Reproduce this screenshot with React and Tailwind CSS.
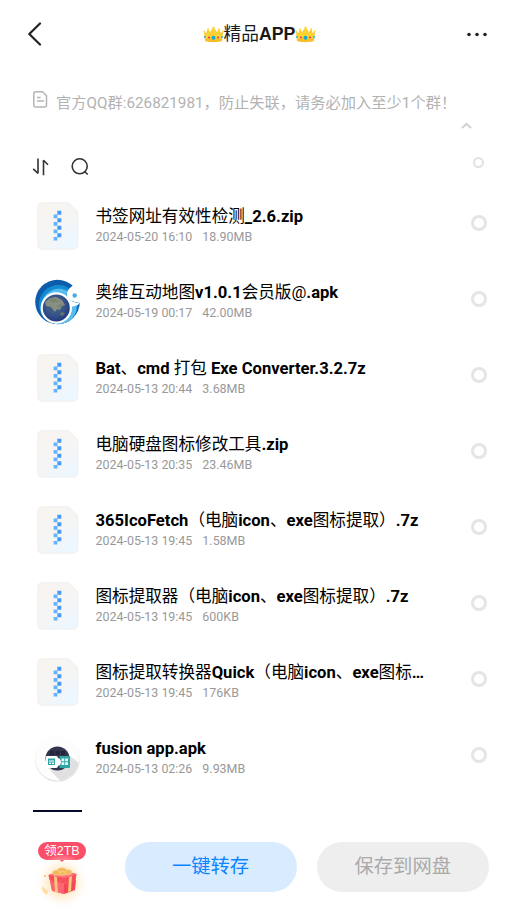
import React from "react";

const files = [
  { name: "书签网址有效性检测_2.6.zip", date: "2024-05-20 16:10", size: "18.90MB", icon: "zip" },
  { name: "奥维互动地图v1.0.1会员版@.apk", date: "2024-05-19 00:17", size: "42.00MB", icon: "globe" },
  { name: "Bat、cmd 打包 Exe Converter.3.2.7z", date: "2024-05-13 20:44", size: "3.68MB", icon: "zip" },
  { name: "电脑硬盘图标修改工具.zip", date: "2024-05-13 20:35", size: "23.46MB", icon: "zip" },
  { name: "365IcoFetch（电脑icon、exe图标提取）.7z", date: "2024-05-13 19:45", size: "1.58MB", icon: "zip" },
  { name: "图标提取器（电脑icon、exe图标提取）.7z", date: "2024-05-13 19:45", size: "600KB", icon: "zip" },
  { name: "图标提取转换器Quick（电脑icon、exe图标…", date: "2024-05-13 19:45", size: "176KB", icon: "zip" },
  { name: "fusion app.apk", date: "2024-05-13 02:26", size: "9.93MB", icon: "fusion" },
];

/* Latin runs are bold, Chinese runs and "@" stay regular */
function MixedText({ text }) {
  return text.split(/([\u3000-\u9fff\uff00-\uffef@]+)/).map((part, i) => (
    <span key={i} className={i % 2 ? "font-normal" : "font-bold"}>
      {part}
    </span>
  ));
}

function Crown() {
  return (
    <svg className="h-[17px] w-[21px]" viewBox="0 0 21 17">
      <path
        d="M2.4 14.5 1.3 5.8l2.2 2L5 3.5l2 3.3L10.5 1.5 14 6.8l2-3.3 1.5 4.3 2.2-2-1.1 8.7q-8.1 2.6-16.2 0Z"
        fill="#fdd32f"
        stroke="#f4b921"
        strokeWidth=".6"
      />
      <path d="M2 12.500q8.500 1.500 17 0l-.5 2.800q-8 1.600-16 0Z" fill="#fbbd25" />
      <g fill="#ffdc3d">
        <circle cx="1.3" cy="5.5" r="1" />
        <circle cx="5" cy="3.2" r="1" />
        <circle cx="10.5" cy="1.7" r="1.2" />
        <circle cx="16" cy="3.2" r="1" />
        <circle cx="19.7" cy="5.5" r="1" />
      </g>
      <circle cx="10.5" cy="11.7" r="2" fill="#15a6d6" />
      <circle cx="6" cy="11.5" r="1.1" fill="#e8396b" />
      <circle cx="15" cy="11.5" r="1.1" fill="#e8396b" />
      <circle cx="1.9" cy="11" r="1.1" fill="#39b5d5" />
      <circle cx="19.1" cy="11" r="1.1" fill="#39b5d5" />
    </svg>
  );
}

function ZipIcon() {
  return (
    <svg className="h-[48px] w-[42px]" viewBox="0 0 42 48">
      <defs>
        <linearGradient id="zipPaper" x1="0" y1="0" x2=".7" y2="1">
          <stop offset="0" stopColor="#f8f4f0" />
          <stop offset=".55" stopColor="#f6f5f4" />
          <stop offset="1" stopColor="#ecf7ff" />
        </linearGradient>
      </defs>
      <path
        d="M5.500.8H30q2 0 3.500 1.500l5.700 5.700q1.500 1.500 1.500 3.500v31q0 4.700-4.700 4.700H5.500Q.8 47.200.8 42.500v-37Q.8.8 5.500.8Z"
        fill="url(#zipPaper)"
        stroke="#f1efed"
        strokeWidth="1"
      />
      <g fill="#4499fa">
        <path d="M20.300 8.700h4v4h-4zM20.300 16.200h4v4h-4zM20.300 23.700h4v4h-4zM20.300 31.200h4v4h-4z" />
        <path d="M16.600 12.500h3.800v3.800h-3.800zM16.600 20h3.800v3.800h-3.800zM16.600 27.500h3.800v3.800h-3.800zM16.600 35h3.800v3.500h-3.800z" fill="#66b2fd" />
      </g>
    </svg>
  );
}

function GlobeIcon() {
  return (
    <svg className="mt-px h-[46px] w-[46px]" viewBox="0 0 46 46">
      <defs>
        <radialGradient id="earth" cx=".45" cy=".4" r=".6">
          <stop offset="0" stopColor="#526d7c" />
          <stop offset=".65" stopColor="#34528a" />
          <stop offset="1" stopColor="#22397c" />
        </radialGradient>
        <clipPath id="globeDisc">
          <path d="M0 0h32l3.500 2-.5 2 3 2.500q-6 3.500-6.500 9Q32 23 46 24v22H0Z" />
        </clipPath>
      </defs>
      <g clipPath="url(#globeDisc)">
        <circle cx="22.500" cy="23" r="22.300" fill="#0e5dab" />
        <circle cx="23.500" cy="25.500" r="19.500" fill="#148ad2" />
        <circle cx="24" cy="27.500" r="17.700" fill="#56bdec" />
      </g>
      <circle cx="21.300" cy="29" r="15.700" fill="#fff" />
      <path d="M32 18q5 6 12.500 6L43 26l-7 2Z" fill="#fff" />
      <circle cx="39.700" cy="16.500" r="2.200" fill="#43aee2" />
      <circle cx="21.300" cy="29" r="13.500" fill="url(#earth)" />
      <path d="m10 23 5-4 6-1 6 3 3 5-3 1-2 4-3-1-2 3-4-5-5-1Z" fill="#a09e86" opacity=".75" />
      <path d="m26 33 4 1-2 3-3-1ZM14 19l7 1 3 3-7 1ZM21 27l6-2-1 4Z" fill="#6c8564" opacity=".7" />
    </svg>
  );
}

function FusionIcon() {
  return (
    <svg className="mt-[2px] h-[46px] w-[46px]" viewBox="0 0 46 46">
      <circle cx="22.500" cy="23.300" r="22.300" fill="#d8d8d8" />
      <circle cx="22.500" cy="22.500" r="22.200" fill="#fdfdfd" />
      <path d="m13 32 22-12 9 7Q41 41 25 44.500Z" fill="#e0e0e0" />
      <circle cx="22.500" cy="22.500" r="12" fill="#31344b" />
      <path d="M15 15h4v4h-4zM20.500 15h4v4h-4zM26 15h4v4h-4z" fill="#222539" />
      <path d="M12 20h9q2 0 2 2 3.500.5 3.500 4t-3.500 4q0 2-2 2h-9q-1 0-1-1V21q0-1 1-1Z" fill="#fff" />
      <path d="M13 22.500h7v6.500h-7Z" fill="#32a6a6" />
      <path d="M14 24.500h5v1h-5zM14 26.500h2v1.500h-2zM17 26.500h2v1.500h-2z" fill="#fff" />
      <path d="M24.500 20H34q1 0 1 1v10q0 1-1 1h-9.500v-2.500q3-3.500 0-7Z" fill="#2fa4a5" />
      <path d="M26.500 22.500h2.800v2.800h-2.800zM30.200 22.500h2.800v2.800h-2.800zM26.500 26.200h2.800V29h-2.800zM30.200 26.200h2.800V29h-2.800z" fill="#e8ffff" />
    </svg>
  );
}

function Gift() {
  return (
    <svg className="h-[56px] w-[60px]" viewBox="0 0 60 56">
      <defs>
        <radialGradient id="giftGlow">
          <stop offset="0" stopColor="#ffd591" />
          <stop offset=".5" stopColor="#ffe8c3" stopOpacity=".75" />
          <stop offset="1" stopColor="#fff" stopOpacity="0" />
        </radialGradient>
      </defs>
      <circle cx="30" cy="27" r="28" fill="url(#giftGlow)" />
      <path d="M28 5h4l-2 2Z" fill="#fb4e69" />
      <path d="m10 31 6 5-1 4q-6-3-5-9Z" fill="#ffdda2" />
      <circle cx="13" cy="21" r="1" fill="#f7b477" />
      <path d="m18 25 14 4 12-4-1 10-11 4-12-4Z" fill="#f24659" />
      <path d="m18 26 14 3v10l-12-3Z" fill="#fb6672" />
      <path d="m16.500 20 14-5 14 4-1 7-11 3-15-4Z" fill="#f6505f" />
      <path d="m16.500 20 14-4 14 3-12 4Z" fill="#ff7779" />
      <path d="m22 21 3 1 1 16-3-1ZM37 22l3-1-1 15-3 1Z" fill="#f7c778" />
      <g fill="#f0b85f" stroke="#ffdc95" strokeWidth=".6">
        <ellipse cx="25.500" cy="17.500" rx="5" ry="2.600" />
        <ellipse cx="35" cy="17" rx="5" ry="2.600" />
        <ellipse cx="30" cy="15" rx="4.500" ry="2.300" />
        <ellipse cx="30.500" cy="18.500" rx="3" ry="1.800" />
      </g>
    </svg>
  );
}

const icons = { zip: ZipIcon, globe: GlobeIcon, fusion: FusionIcon };

function FileRow({ file }) {
  const Icon = icons[file.icon];
  return (
    <li className="flex h-[76px] items-start pl-[35px] pr-[32px] pt-[14px]">
      <div className="flex w-[46px] shrink-0 justify-center">
        <Icon />
      </div>
      <div className="ml-[14.500px] min-w-0 flex-1 pt-[3px]">
        <p className="h-6 whitespace-nowrap text-[16.600px] leading-6 text-black">
          <MixedText text={file.name} />
        </p>
        <p className="-mt-px flex h-[18px] gap-[10px] text-[12.450px] leading-[18px] text-[#999]">
          <span>{file.date}</span>
          <span>{file.size}</span>
        </p>
      </div>
      <span className="mt-[13px] size-4 shrink-0 rounded-full border-[3px] border-[#e5e5e5]" />
    </li>
  );
}

export default function App() {
  return (
    <div className="flex h-[922px] w-[519px] flex-col overflow-hidden bg-white font-['Roboto','Noto_Sans_CJK_SC',sans-serif]">
      {/* HEADER */}
      <header className="flex h-[68px] shrink-0 items-center justify-between pl-[27px] pr-[31px]">
        <svg className="h-6 w-[22px]" viewBox="0 0 22 24" fill="none">
          <path d="M13 1.500 2.300 12 13 22.500" stroke="#222" strokeWidth="2.200" strokeLinecap="round" strokeLinejoin="round" />
        </svg>
        <h1 className="ml-[4px] flex items-center text-[17.700px] leading-6 text-[#1a1a1a]">
          <Crown />
          <span className="font-['Liberation_Sans','Noto_Sans_CJK_SC',sans-serif]">
            <MixedText text="精品APP" />
          </span>
          <Crown />
        </h1>
        <svg className="h-[5px] w-[22px]" viewBox="0 0 22 5" fill="#222">
          <circle cx="3" cy="2.500" r="1.800" />
          <circle cx="11" cy="2.500" r="1.800" />
          <circle cx="19" cy="2.500" r="1.800" />
        </svg>
      </header>

      {/* NOTICE */}
      <div className="flex h-[76px] shrink-0 items-start pl-[32px] pr-[47px] pt-[22px]">
        <svg className="h-[19px] w-[17px] shrink-0" viewBox="0 0 17 19" fill="none" stroke="#b5b5b5" strokeWidth="1.500">
          <path d="M4 1.700h6.500l4 4V15q0 2-2 2H4q-2.200 0-2.200-2V3.700q0-2 2.200-2ZM5 7.500h3.500M5 11h7" />
        </svg>
        <p className="ml-[7px] mt-px whitespace-nowrap text-[15.250px] leading-6 text-[#b2b2b2]">
          官方QQ群:626821981，防止失联，请务必加入至少1个群！
        </p>
        <svg className="ml-auto mt-[32px] h-[7px] w-[11px] shrink-0" viewBox="0 0 11 7" fill="none">
          <path d="M1 6l4.500-4L10 6" stroke="#d2d2d2" strokeWidth="2.200" />
        </svg>
      </div>

      {/* TOOLBAR */}
      <div className="flex h-[44px] shrink-0 items-center pl-[32px] pr-[35px]">
        <svg className="mt-px h-[18px] w-[18px]" viewBox="0 0 18 18" fill="none" stroke="#333" strokeWidth="1.600">
          <path d="M6 .5v14.800L1.200 10.800M11.500 17.200V2.300l4.500 4.500" strokeLinejoin="bevel" />
        </svg>
        <svg className="ml-[21px] mt-px h-[18px] w-[18px]" viewBox="0 0 18 18" fill="none" stroke="#333" strokeWidth="1.600">
          <circle cx="8.700" cy="8.300" r="7.500" />
          <path d="m13.500 13.500 3.300 3" />
        </svg>
        <span className="mb-[7px] ml-auto size-[11px] rounded-full border-2 border-[#e2e2e2]" />
      </div>

      {/* FILES */}
      <ul className="shrink-0">
        {files.map((f) => (
          <FileRow key={f.name} file={f} />
        ))}
      </ul>
      <div className="ml-[33px] mt-[14px] h-[2px] w-[49px] shrink-0 bg-[#050a2c]" />

      {/* ACTIONS */}
      <footer className="flex flex-1 items-start pl-[32px] pr-[30px] pt-[30px]">
        <div className="flex w-[60px] flex-col items-center">
          <div className="flex h-[18px] w-[48px] items-center justify-center rounded-full bg-[#fb4e69] pt-px font-['Liberation_Sans','Noto_Sans_CJK_SC',sans-serif] text-[12.500px] leading-none text-white">
            领2TB
          </div>
          <div className="-mt-[5px]">
            <Gift />
          </div>
        </div>
        <button className="ml-[32.500px] h-[50px] w-[172px] rounded-full bg-[#d9ebff] text-[19.300px] text-[#0a84ff]">
          一键转存
        </button>
        <button className="ml-[20.500px] h-[50px] w-[171.500px] rounded-full bg-[#eee] text-[19.300px] text-[#aaa]">
          保存到网盘
        </button>
      </footer>
    </div>
  );
}
